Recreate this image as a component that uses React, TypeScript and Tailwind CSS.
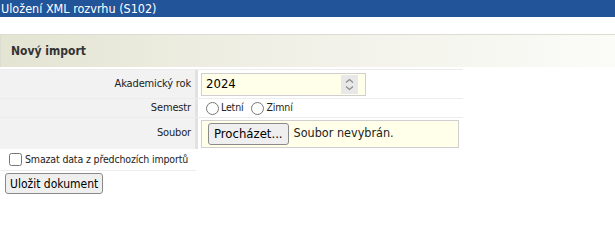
import { useState } from 'react';

const FONT = "font-['DejaVu_Sans_Condensed','DejaVu_Sans',sans-serif]";

export default function App() {
  const [year, setYear] = useState('2024');
  const [semester, setSemester] = useState('');
  const [wipe, setWipe] = useState(false);

  return (
    <div className={`w-[615px] h-[204px] bg-white text-[11px] tracking-[-0.15px] text-[#222] ${FONT}`}>
      {/* title bar */}
      <div className="h-[17px] bg-[#22549a] pl-[1px] text-[12.5px] tracking-normal leading-[17px] text-white">
        Uložení XML rozvrhu (S102)
      </div>

      {/* panel heading */}
      <div className="mt-[17px] h-[33px] border-t border-l border-[#dcdcd0] bg-gradient-to-r from-[#e4e4d3] via-[#f1f1e8] to-[#fbfbf8] pl-[10px] flex items-center">
        <span className="text-[12px] tracking-normal font-bold text-[#333]">Nový import</span>
      </div>

      {/* form table */}
      <div className="mt-[2px] w-[463px] border-t border-[#ececec]">
        <div className="flex h-[29px] border-b border-[#ececec]">
          <div className="w-[195px] bg-[#f2f2f2] flex items-center justify-end pr-[4px]">Akademický rok</div>
          <div className="w-[3px] bg-[#e2e2e2]" />
          <div className="flex-1 flex items-center pl-[3px]">
            <div className="w-[165px] h-[23px] border border-[#cfcfcf] bg-[#ffffea] flex items-center pl-[4px] pr-[7px]">
              <input
                value={year}
                onChange={e => setYear(e.target.value)}
                className="flex-1 min-w-0 bg-transparent outline-none text-[13px] tracking-normal text-black"
              />
              <div className="w-[17px] h-[19px] bg-[#e8e8e8] flex flex-col items-center justify-center">
                <svg width="9" height="13" viewBox="0 0 9 13" fill="none" stroke="#888" strokeWidth="1.1">
                  <path d="M1 4.5 L4.5 1.5 L8 4.5" />
                  <path d="M1 8.5 L4.5 11.5 L8 8.5" />
                </svg>
              </div>
            </div>
          </div>
        </div>

        <div className="flex h-[19px] border-b border-[#ececec]">
          <div className="w-[195px] bg-[#f2f2f2] flex items-center justify-end pr-[4px]">Semestr</div>
          <div className="w-[3px] bg-[#e2e2e2]" />
          <div className="flex-1 flex items-center pl-[8px] text-[10.5px]">
            {['Letní', 'Zimní'].map(s => (
              <label key={s} className="flex items-center mr-[8px] cursor-pointer" onClick={() => setSemester(s)}>
                <span className="w-[13px] h-[13px] rounded-full border-[1.5px] border-[#777] bg-white flex items-center justify-center">
                  {semester === s && <span className="w-[6px] h-[6px] rounded-full bg-[#333]" />}
                </span>
                <span className="ml-[2px]">{s}</span>
              </label>
            ))}
          </div>
        </div>

        <div className="flex h-[31px]">
          <div className="w-[195px] bg-[#f2f2f2] flex items-center justify-end pr-[4px]">Soubor</div>
          <div className="w-[3px] bg-[#e2e2e2]" />
          <div className="flex-1 flex items-center pl-[3px]">
            <div className="w-[258px] h-[28px] border border-[#cfcfcf] bg-[#ffffea] flex items-center pl-[6px] text-[13px] tracking-normal">
              <button className="h-[22px] px-[5px] rounded-[3px] border border-[#8a8a8a] bg-[#efefef] text-black">
                Procházet...
              </button>
              <span className="ml-[5px] text-[12.5px] text-[#222]">Soubor nevybrán.</span>
            </div>
          </div>
        </div>
      </div>

      {/* wipe option */}
      <div className="w-[196px] h-[22px] border-b border-[#ececec] flex items-center pl-[9px]">
        <label className="flex items-center cursor-pointer whitespace-nowrap">
          <input
            type="checkbox"
            checked={wipe}
            onChange={e => setWipe(e.target.checked)}
            className="w-[13px] h-[13px] m-0 accent-[#555]"
          />
          <span className="ml-[3px] text-[10.5px]">Smazat data z předchozích importů</span>
        </label>
      </div>

      <div className="pl-[5px] pt-[2px]">
        <button className="h-[21px] px-[4px] rounded-[3px] border border-[#8a8a8a] bg-[#efefef] text-[12px] tracking-normal text-black">
          Uložit dokument
        </button>
      </div>
    </div>
  );
}
